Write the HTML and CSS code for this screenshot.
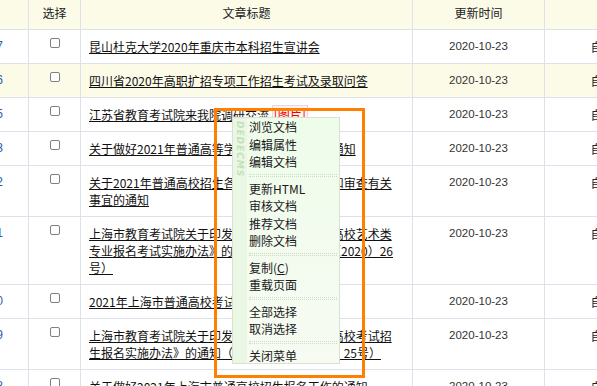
FILE: index.html
```html
<!DOCTYPE html>
<html lang="zh-CN">
<head>
    <meta charset="UTF-8">
    <title>文档列表</title>
    <link rel="stylesheet" href="styles.css">
</head>
<body>
    <div class="page">
        <table class="list">
            <colgroup>
                <col class="c-id">
                <col class="c-sel">
                <col class="c-title">
                <col class="c-date">
                <col class="c-type">
            </colgroup>
            <thead>
                <tr>
                    <th>ID</th>
                    <th>选择</th>
                    <th>文章标题</th>
                    <th>更新时间</th>
                    <th>类别</th>
                </tr>
            </thead>
            <tbody>
                <tr>
                    <td class="id">387</td>
                    <td><input type="checkbox" class="pick"></td>
                    <td class="title"><a href="#">昆山杜克大学2020年重庆市本科招生宣讲会</a></td>
                    <td class="date">2020-10-23</td>
                    <td class="type">自动生成</td>
                </tr>
                <tr class="alt">
                    <td class="id">386</td>
                    <td><input type="checkbox" class="pick"></td>
                    <td class="title"><a href="#">四川省2020年高职扩招专项工作招生考试及录取问答</a></td>
                    <td class="date">2020-10-23</td>
                    <td class="type">自动生成</td>
                </tr>
                <tr>
                    <td class="id">385</td>
                    <td><input type="checkbox" class="pick"></td>
                    <td class="title"><a href="#">江苏省教育考试院来我院调研交流</a> <span class="flag">[图片]</span></td>
                    <td class="date">2020-10-23</td>
                    <td class="type">自动生成</td>
                </tr>
                <tr>
                    <td class="id">383</td>
                    <td><input type="checkbox" class="pick"></td>
                    <td class="title"><a href="#">关于做好2021年普通高等学校招生考试工作的通知</a></td>
                    <td class="date">2020-10-23</td>
                    <td class="type">自动生成</td>
                </tr>
                <tr>
                    <td class="id">382</td>
                    <td><input type="checkbox" class="pick"></td>
                    <td class="title"><a href="#">关于2021年普通高校招生各省份报名资格审核和审查有关事宜的通知</a></td>
                    <td class="date">2020-10-23</td>
                    <td class="type">自动生成</td>
                </tr>
                <tr>
                    <td class="id">381</td>
                    <td><input type="checkbox" class="pick"></td>
                    <td class="title"><a href="#">上海市教育考试院关于印发《2021年上海普通高校艺术类专业报名考试实施办法》的通知（沪教考院艺（2020）26号）</a></td>
                    <td class="date">2020-10-23</td>
                    <td class="type">自动生成</td>
                </tr>
                <tr>
                    <td class="id">380</td>
                    <td><input type="checkbox" class="pick"></td>
                    <td class="title"><a href="#">2021年上海市普通高校考试招生规定</a></td>
                    <td class="date">2020-10-23</td>
                    <td class="type">自动生成</td>
                </tr>
                <tr>
                    <td class="id">379</td>
                    <td><input type="checkbox" class="pick"></td>
                    <td class="title"><a href="#">上海市教育考试院关于印发《2021年上海普通高校考试招生报名实施办法》的通知（沪教考院招（2020）25号）</a></td>
                    <td class="date">2020-10-23</td>
                    <td class="type">自动生成</td>
                </tr>
                <tr>
                    <td class="id">378</td>
                    <td><input type="checkbox" class="pick"></td>
                    <td class="title"><a href="#">关于做好2021年上海市普通高校招生报名工作的通知</a></td>
                    <td class="date">2020-10-23</td>
                    <td class="type">自动生成</td>
                </tr>
            </tbody>
        </table>

        <div class="menu">
            <div class="menu-brand">DEDECMS</div>
            <div class="menu-list">
                <div class="menu-item">浏览文档</div>
                <div class="menu-item">编辑属性</div>
                <div class="menu-item">编辑文档</div>
                <div class="menu-sep"></div>
                <div class="menu-item">更新HTML</div>
                <div class="menu-item">审核文档</div>
                <div class="menu-item">推荐文档</div>
                <div class="menu-item">删除文档</div>
                <div class="menu-sep"></div>
                <div class="menu-item">复制(<u>C</u>)</div>
                <div class="menu-item">重载页面</div>
                <div class="menu-sep"></div>
                <div class="menu-item">全部选择</div>
                <div class="menu-item">取消选择</div>
                <div class="menu-sep"></div>
                <div class="menu-item">关闭菜单</div>
            </div>
        </div>

        <div class="mark"></div>
    </div>
</body>
</html>
```

FILE: styles.css
```css
body {
    margin: 0;
    padding: 0;
    font-family: "Noto Sans CJK SC", "Noto Sans", sans-serif;
    font-size: 12px;
    color: #222;
    background: #fff;
    overflow: hidden;
}

.page {
    position: relative;
    width: 597px;
    height: 386px;
    overflow: hidden;
}

.list {
    border-collapse: collapse;
    table-layout: fixed;
    width: 727px;
    margin: -5px 0 0 -43px;
}

.c-id { width: 71px; }
.c-sel { width: 52px; }
.c-title { width: 332px; }
.c-date { width: 132px; }
.c-type { width: 140px; }

.list th,
.list td {
    border: 1px solid #dde1ea;
    padding: 8px 0;
    line-height: 17px;
    vertical-align: top;
    text-align: center;
    font-weight: normal;
    color: #222;
}

.list thead tr,
.list tr.alt {
    background: #fbfbe7;
}

.list td.id {
    color: #2a5caa;
    font-family: "Liberation Sans", Arial, sans-serif;
}

.pick {
    appearance: none;
    -webkit-appearance: none;
    display: block;
    width: 10px;
    height: 10px;
    margin: 0 auto;
    border: 1px solid #808080;
    border-radius: 2px;
    background: #fff;
    box-sizing: border-box;
}

.list td.title {
    text-align: left;
    padding: 8px 15px 8px 8px;
}

.title a {
    color: #111;
    text-decoration: underline;
}

.flag {
    color: #e00;
    background: #fff2f2;
    border: 1px solid #ead6d6;
    padding: 0 1px;
}

.list td.date {
    font-family: "Liberation Sans", Arial, sans-serif;
    font-size: 11.5px;
    color: #333;
}

/* right-click menu */
.menu {
    position: absolute;
    left: 232px;
    top: 117px;
    width: 106px;
    height: 245px;
    display: flex;
    border: 1px solid #d9e2cd;
    background: linear-gradient(#eefcea, #f7fbf3);
}

.menu-brand {
    width: 14px;
    writing-mode: vertical-rl;
    font-family: "DejaVu Sans", sans-serif;
    font-size: 9px;
    font-weight: bold;
    font-style: italic;
    letter-spacing: 1px;
    line-height: 14px;
    color: #c3e2ba;
    background: #e9f7e4;
    padding-top: 3px;
}

.menu-list {
    flex: 1;
    padding: 0 2px;
}

.menu-item {
    height: 17.5px;
    line-height: 17.5px;
    color: #1a1a1a;
}

.menu-sep {
    height: 1px;
    margin: 3px 0;
    border-top: 1px dotted #cfdac2;
    border-bottom: 1px dotted #cfdac2;
}

/* highlight frame */
.mark {
    position: absolute;
    left: 214px;
    top: 108px;
    width: 145px;
    height: 264px;
    border: 3px solid #ff8000;
}
```
